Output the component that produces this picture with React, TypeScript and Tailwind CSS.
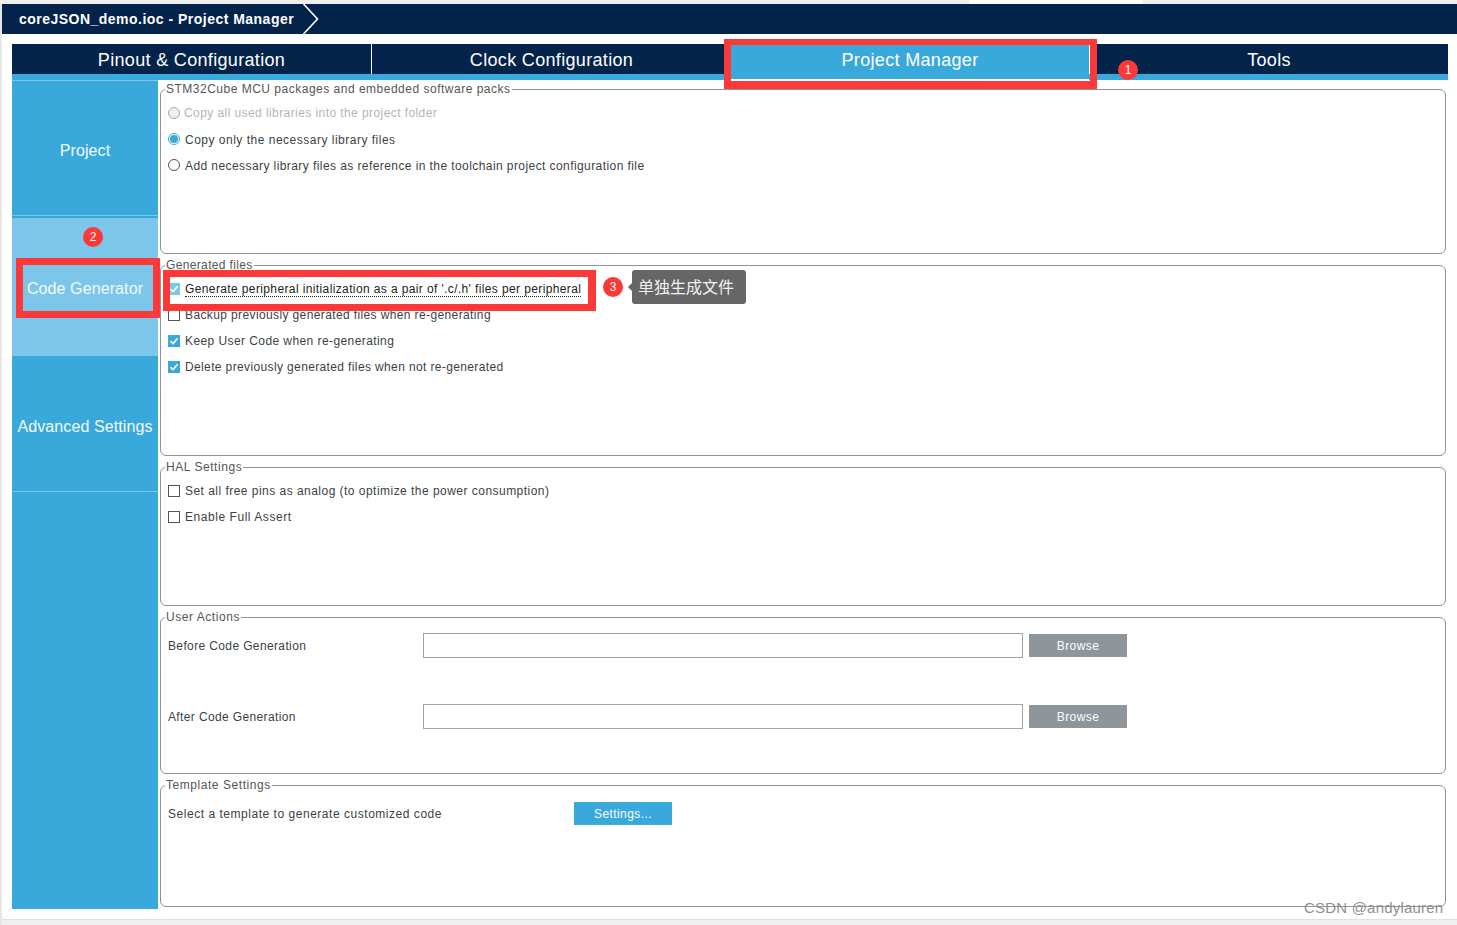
import React from 'react';

type CheckProps = {
  checked?: boolean;
  faded?: boolean;
  children: React.ReactNode;
};

function CheckRow({ checked, faded, children }: CheckProps) {
  return (
    <div className="flex h-[26px] items-center pl-[7px]">
      {checked ? (
        <span className={`flex h-[12px] w-[12px] items-center justify-center ${faded ? 'bg-[#7cc6e9]' : 'bg-[#39a9dc]'}`}>
          <svg width="10" height="10" viewBox="0 0 10 10" fill="none">
            <path d="M1.5 5.2 4 7.6 8.6 2.4" stroke="#fff" strokeWidth="1.6" />
          </svg>
        </span>
      ) : (
        <span className="h-[12px] w-[12px] border border-[#555] bg-white" />
      )}
      <span className="ml-[5px]">{children}</span>
    </div>
  );
}

function RadioRow({ state, children }: { state: 'off' | 'on' | 'disabled'; children: React.ReactNode }) {
  return (
    <div className={`flex h-[26px] items-center pl-[7px] ${state === 'disabled' ? 'text-[#b4b4b4]' : ''}`}>
      {state === 'on' && (
        <span className="mb-[2px] flex h-[12px] w-[12px] items-center justify-center rounded-full border border-[#39a9dc] bg-white">
          <span className="h-[8px] w-[8px] rounded-full bg-[#39a9dc]" />
        </span>
      )}
      {state === 'off' && <span className="mb-[2px] h-[12px] w-[12px] rounded-full border border-[#555] bg-white" />}
      {state === 'disabled' && <span className="h-[12px] w-[12px] rounded-full border border-[#a8a8a8] bg-[#eee]" />}
      <span className={state === 'disabled' ? 'ml-[4px]' : 'ml-[5px]'}>{children}</span>
    </div>
  );
}

function Panel({ title, className, legendClass, children }: { title: string; className: string; legendClass?: string; children?: React.ReactNode }) {
  return (
    <fieldset className={`rounded-[6px] border border-[#8e949a] ${className}`}>
      <legend className={`ml-[4px] h-[16px] px-[1px] text-[12px] leading-[16px] text-[#555] ${legendClass ?? 'tracking-[0.55px]'}`}>{title}</legend>
      <div className="pt-[3px]">{children}</div>
    </fieldset>
  );
}

function Badge({ n, className }: { n: number; className: string }) {
  return (
    <span className={`absolute flex h-[20px] w-[20px] items-center justify-center rounded-full bg-[#fc3838] text-[12px] tracking-normal text-white ${className}`}>
      {n}
    </span>
  );
}

function ActionRow({ label, className }: { label: string; className: string }) {
  return (
    <div className={`flex items-center pl-[7px] ${className}`}>
      <span className="w-[255px] tracking-[0.37px]">{label}</span>
      <span className="h-[25px] w-[600px] border border-[#a0a4a8] bg-white" />
      <button className="ml-[6px] h-[23px] w-[98px] bg-[#8e959b] text-[12px] tracking-[0.42px] text-white">Browse</button>
    </div>
  );
}

export default function App() {
  return (
    <div className="relative flex h-[925px] w-[1457px] flex-col overflow-hidden bg-white text-[12px] tracking-[0.42px] text-[#3c3f44] [font-family:'Liberation_Sans',sans-serif]">
      {/* window strip */}
      <div className="flex h-[4px] bg-[#efefef]">
        <div className="ml-[969px] w-[174px] bg-white" />
      </div>

      <div className="flex flex-1 flex-col border-l-2 border-[#e6e6e6]">
        {/* breadcrumb */}
        <div className="flex h-[30px] items-center bg-[#03234b] pl-[17px]">
          <span className="pt-[1px] text-[14px] font-bold tracking-[0.48px] text-white">coreJSON_demo.ioc - Project Manager</span>
          <svg className="ml-[8px]" width="18" height="30" viewBox="0 0 18 30" fill="none">
            <path d="M1.5 0 15.5 15 1.5 30" stroke="#fff" strokeWidth="1.6" />
          </svg>
        </div>

        {/* main tabs */}
        <div className="ml-[10px] mr-[9px] mt-[10px] grid h-[30px] grid-cols-[360px_359px_359px_358px] bg-[#03234b] text-[18px] tracking-[0.33px] text-white">
          <div className="flex items-center justify-center border-r border-white pt-[2px]">Pinout &amp; Configuration</div>
          <div className="flex items-center justify-center pt-[2px]">Clock Configuration</div>
          <div className="relative flex items-center justify-center border-r border-white bg-[#39a9dc] pt-[2px]">
            Project Manager
            <span className="absolute -bottom-[15px] -left-[7px] -right-[8px] -top-[5px] border-x-[7px] border-b-[8px] border-t-[6px] border-[#fc3838]" />
            <span className="absolute -bottom-[7px] left-0 right-0 h-[2px] bg-white" />
          </div>
          <div className="flex items-center justify-center pt-[2px]">Tools</div>
        </div>
        <div className="ml-[10px] mr-[9px] h-[6px] bg-[#39a9dc]" />

        <div className="ml-[10px] flex h-[829px]">
          {/* side menu */}
          <div className="flex w-[146px] flex-col bg-[#39a9dc] text-[16px] tracking-[0.1px] text-[#f4fafd]">
            <div className="flex h-[136px] items-center justify-center border-y border-[#7cc6e9] pt-[6px]">Project</div>
            <div className="relative mt-[2px] flex h-[138px] items-center justify-center bg-[#7cc6e9] pt-[4px]">
              Code Generator
              <span className="absolute left-[4px] top-[40px] h-[60px] w-[144px] border-[7px] border-[#fc3838]" />
            </div>
            <div className="flex h-[136px] items-center justify-center border-b border-[#7cc6e9] pt-[7px]">Advanced Settings</div>
          </div>

          {/* settings */}
          <div className="ml-[2px] flex w-[1286px] flex-col gap-[3px] pt-px">
            <Panel title="STM32Cube MCU packages and embedded software packs" legendClass="tracking-[0.5px]" className="h-[173px]">
              <RadioRow state="disabled">Copy all used libraries into the project folder</RadioRow>
              <div className="mt-px">
                <RadioRow state="on"><span className="tracking-[0.5px]">Copy only the necessary library files</span></RadioRow>
              </div>
              <RadioRow state="off">Add necessary library files as reference in the toolchain project configuration file</RadioRow>
            </Panel>

            <Panel title="Generated files" legendClass="tracking-[0.35px]" className="relative h-[199px]">
              <CheckRow checked faded>
                <span className="border-b border-dotted border-[#222] tracking-[0.38px] text-[#222]">Generate peripheral initialization as a pair of '.c/.h' files per peripheral</span>
              </CheckRow>
              <CheckRow><span className="tracking-[0.38px]">Backup previously generated files when re-generating</span></CheckRow>
              <CheckRow checked>Keep User Code when re-generating</CheckRow>
              <CheckRow checked><span className="tracking-[0.37px]">Delete previously generated files when not re-generated</span></CheckRow>

              <span className="absolute left-[2px] -top-[3px] h-[41px] w-[433px] border-y-[7px] border-l-[7px] border-r-[8px] border-[#fc3838]" />
              <Badge n={3} className="left-[442px] top-[4px]" />
              <div className="absolute left-[471px] -top-[3px] flex h-[34px] w-[114px] items-center rounded-[3px] bg-[#666] pl-[6px] pt-[1px] text-[16px] tracking-normal text-[#f2f2f2] [font-family:'Liberation_Sans','Noto_Sans_CJK_SC',sans-serif]">
                <span className="absolute -left-[4px] top-[13px] h-0 w-0 border-y-[4px] border-r-[4px] border-y-transparent border-r-[#666]" />
                单独生成文件
              </div>
            </Panel>

            <Panel title="HAL Settings" className="h-[147px]">
              <CheckRow><span className="tracking-[0.47px]">Set all free pins as analog (to optimize the power consumption)</span></CheckRow>
              <CheckRow><span className="tracking-[0.55px]">Enable Full Assert</span></CheckRow>
            </Panel>

            <Panel title="User Actions" className="h-[165px]">
              <ActionRow label="Before Code Generation" className="mt-[5px]" />
              <ActionRow label="After Code Generation" className="mt-[46px]" />
            </Panel>

            <Panel title="Template Settings" className="h-[130px]">
              <div className="mt-[6px] flex items-center pl-[7px]">
                <span className="w-[406px] tracking-[0.53px]">Select a template to generate customized code</span>
                <button className="h-[23px] w-[98px] bg-[#39a9dc] text-[12px] tracking-[0.42px] text-white">Settings...</button>
              </div>
            </Panel>
          </div>
        </div>

        <div className="mt-[10px] flex-1 border-t border-[#e0e0e0] bg-[#efefef]" />
      </div>

      {/* annotations over the page */}
      <Badge n={1} className="left-[1118px] top-[60px]" />
      <Badge n={2} className="left-[83px] top-[227px]" />
      <span className="absolute left-[1304px] top-[897px] text-[15px] tracking-[0.2px] text-[#8f8f8f]">CSDN @andylauren</span>
    </div>
  );
}
